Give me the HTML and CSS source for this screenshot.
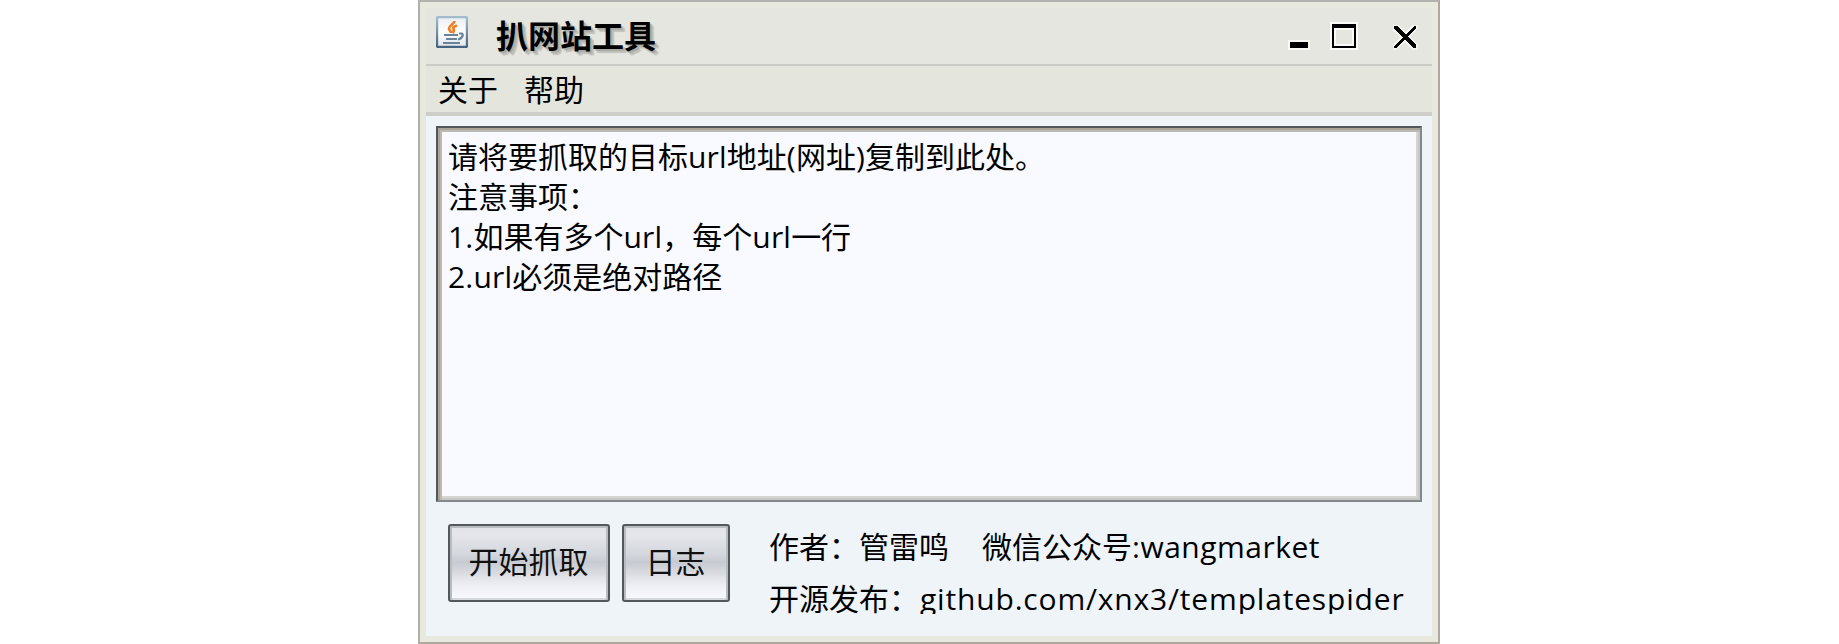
FILE: index.html
```
<!DOCTYPE html>
<html lang="zh-CN">
<head>
<meta charset="utf-8">
<title>扒网站工具</title>
<link rel="stylesheet" href="styles.css">
</head>
<body>
<main class="window">
  <header class="titlebar">
    <svg class="app-icon" width="32" height="32" viewBox="0 0 32 32">
      <defs>
        <linearGradient id="edge" x1="0" y1="0" x2="0" y2="1"><stop offset="0" stop-color="#a3bccd"/><stop offset="1" stop-color="#46637f"/></linearGradient>
        <linearGradient id="face" x1="0" y1="0" x2="0" y2="1"><stop offset="0" stop-color="#e9eef2"/><stop offset=".5" stop-color="#ffffff"/><stop offset="1" stop-color="#dfe6ed"/></linearGradient>
      </defs>
      <rect x="1" y="1" width="30" height="30" rx="1.5" fill="url(#face)" stroke="url(#edge)" stroke-width="2.4"/>
      <path d="M18.500 5C18.500 8 13 9.500 13 12.500C13 14.500 15 15 15 17M21 9.500C18 10.500 16.500 11.500 17.500 13C18.500 15 17.500 16 16.500 17" fill="none" stroke="#ee8028" stroke-width="2.800"/>
      <path d="M8 19h14M10 23h11M7 27h17M23 17.500h3q1.500 1.500 0 3.500q-1.500 2-4 2.500" fill="none" stroke="#6b8399" stroke-width="2.200"/>
    </svg>
    <h1 class="title">扒网站工具</h1>
    <svg class="controls" width="130" height="28" viewBox="0 0 130 28" shape-rendering="crispEdges">
      <path d="M2 20h18v6h-18zM44 2h24v24h-24z" stroke="#fafaf7" stroke-width="4" fill="none"/>
      <path fill="#e5e6df" d="M48 8h16v14h-16z"/>
      <path fill="#fafaf7" fill-rule="evenodd" d="M46 6h20v18h-20zM48 8v14h16v-14z"/>
      <path fill="#000" fill-rule="evenodd" d="M2 20h18v6h-18zM44 2h24v24h-24zM46 6v18h20v-18z"/>
      <path d="M106 4h3l19 19v3h-3l-19-19zM126 4h2v2l-20 20h-2v-2z" fill="none" stroke="#f4f4f0" stroke-width="3"/>
      <path d="M106 4h3l19 19v3h-3l-19-19zM126 4h2v2l-20 20h-2v-2z" fill="#000"/>
    </svg>
  </header>
  <nav class="menubar"><span>关于</span><span>帮助</span></nav>
  <section class="content">
    <div class="editor">
      <p>请将要抓取的目标<span class="latin">url</span>地址<span class="latin">(</span>网址<span class="latin">)</span>复制到此处。</p>
      <p>注意事项：</p>
      <p><span class="latin">1.</span>如果有多个<span class="latin">url</span>，每个<span class="latin">url</span>一行</p>
      <p><span class="latin">2.url</span>必须是绝对路径</p>
    </div>
    <footer class="actions">
      <button class="button start">开始抓取</button>
      <button class="button log">日志</button>
      <div class="info">
        <p class="author"><span>作者：管雷鸣</span><span>微信公众号<span class="wechat">:wangmarket</span></span></p>
        <p class="source">开源发布：<span class="link">github.com/xnx3/templatespider</span></p>
      </div>
    </footer>
  </section>
</main>
</body>
</html>
```
FILE: styles.css
```
* { box-sizing: border-box; }

body {
  margin: 0;
  background: #fff;
  color: #000;
  font: 30px/40px "Open Sans", "Noto Sans CJK SC", sans-serif;
  overflow: hidden;
}

p, h1 { margin: 0; white-space: nowrap; }

.window {
  width: 1022px;
  height: 644px;
  margin-left: 418px;
  padding: 6px;
  background: #e7e8de;
  border: 2px solid;
  border-color: #b1b3ac #b0a89c #b0a89c #b1afaa;
}

.titlebar {
  display: flex;
  height: 58px;
  align-items: flex-start;
  padding: 8px 14px 0 10px;
  background: #e5e6df;
  border-bottom: 2px solid #cbccc6;
}

.app-icon { flex: none; }

.title {
  margin: -2px 0 0 28px;
  font: bold 32px/40px "Noto Sans CJK SC", sans-serif;
  text-shadow: 2px 2px 1px #aaaba6, 4px 4px 1px #c0c1bb;
}

.controls { margin: 6px 0 0 auto; }

.menubar {
  display: flex;
  gap: 26px;
  height: 50px;
  padding: 4px 12px 0;
  background: #e4e5dd;
  border-bottom: 4px solid #cdcec8;
}

.content {
  height: 520px;
  padding: 10px;
  background: #eff4f9;
}

.editor {
  height: 376px;
  padding: 9px 10px;
  background: #f9faff;
  border: 2px solid;
  border-color: #50565a #84888b #84888b #50565a;
  box-shadow: inset 2px 2px #aaa498, inset 4px 4px #bcb8b2, inset -2px -2px #c6c8c5, inset -4px -4px #d5d6d2;
}

.latin { letter-spacing: .2px; }

.actions {
  display: flex;
  padding: 22px 0 0 12px;
}

.button {
  height: 78px;
  padding: 0 1px 2px 0;
  color: #101010;
  font: inherit;
  border: 2px solid #53585d;
  border-radius: 3px;
  background: linear-gradient(#e2e4e9 0%, #e4e6eb 12%, #d4d7dd 38%, #c6cad1 49%, #d5d7dd 60%, #eeeff4 80%, #fafbff 100%);
  box-shadow: inset 2px 0 #b9bdc2, inset -2px 0 #b9bdc2, inset 0 2px #b9bdc2, inset 0 -2px #d5d8dd;
}

.start { width: 162px; }
.log { width: 108px; margin-left: 12px; }

.info { margin-left: 39px; }
.author { display: flex; gap: 33px; height: 52px; padding-top: 3px; }
.source { height: 38px; padding-top: 3px; overflow: hidden; }
.wechat { letter-spacing: .5px; }
.link { margin-left: 1px; letter-spacing: .82px; }
```
